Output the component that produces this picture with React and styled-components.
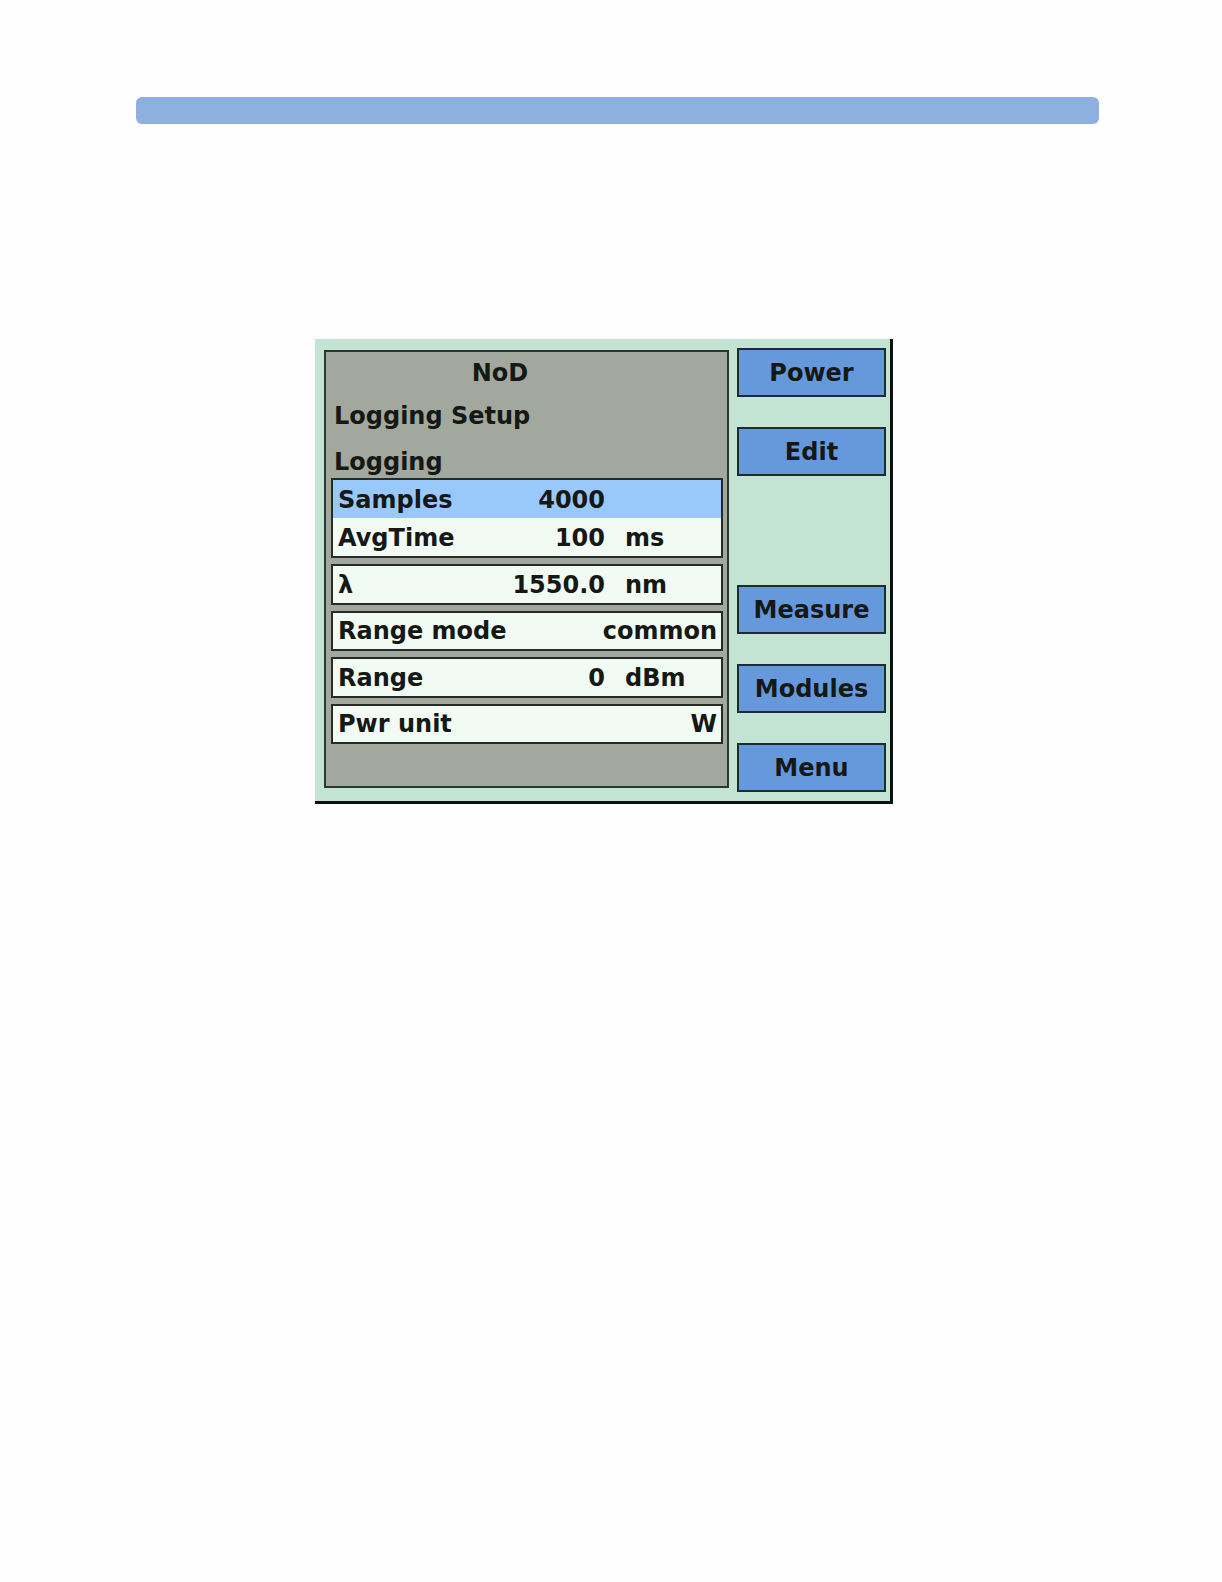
import React from 'react';
import styled, { createGlobalStyle } from 'styled-components';

const GlobalStyle = createGlobalStyle`
  html, body {
    margin: 0;
    padding: 0;
    background: #fefefe;
  }
  body {
    font-family: "DejaVu Sans", "Liberation Sans", sans-serif;
  }
`;

const Page = styled.div`
  width: 1222px;
  min-height: 1582px;
  padding-top: 97px;
  box-sizing: border-box;
`;

const TopBar = styled.div`
  margin-left: 136px;
  width: 963px;
  height: 27px;
  border-radius: 6px;
  background: #8db0e0;
`;

const Screen = styled.section`
  margin: 215px 0 0 315px;
  width: 575px;
  height: 462px;
  display: flex;
  align-items: flex-start;
  background: #c3e4d2;
  border-right: 3px solid #101010;
  border-bottom: 3px solid #101010;
  font-family: "DejaVu Sans", "Liberation Sans", sans-serif;
  font-weight: bold;
  font-size: 24px;
  color: #151815;
`;

const Panel = styled.div`
  margin: 11px 0 0 9px;
  width: 405px;
  height: 438px;
  box-sizing: border-box;
  border: 2px solid #2b3630;
  background: #a3a89f;
`;

const Title = styled.div`
  height: 42px;
  line-height: 42px;
  text-align: center;
  padding-right: 53px;
`;

const Heading = styled.div`
  height: ${p => p.$h}px;
  line-height: ${p => p.$lh}px;
  padding: ${p => p.$pt}px 0 0 8px;
  box-sizing: border-box;
`;

const List = styled.div`
  display: flex;
  flex-direction: column;
  gap: 6px;
  margin: 0 4px 0 5px;
`;

const Box = styled.div`
  border: 2px solid #262b28;
  background: #f1faf3;
`;

const Row = styled.div`
  display: flex;
  align-items: center;
  height: ${p => p.$h || 36.5}px;
  padding: 1px 4px 0 5px;
  box-sizing: border-box;
  background: ${p => (p.$active ? '#99c8fb' : 'transparent')};
  white-space: nowrap;
`;

const Label = styled.span`
  flex: 1;
`;

const Value = styled.span`
  text-align: right;
`;

const Unit = styled.span`
  width: 92px;
  margin-left: 20px;
`;

const Keys = styled.div`
  margin: 9px 0 0 8px;
  display: flex;
  flex-direction: column;
  gap: 30px;
`;

const Key = styled.div`
  width: 149px;
  height: 49px;
  box-sizing: border-box;
  border: 2px solid #1f2a33;
  background: ${p => (p.$empty ? 'transparent' : '#6699dc')};
  border-color: ${p => (p.$empty ? 'transparent' : '#1f2a33')};
  display: flex;
  align-items: center;
  justify-content: center;
  padding-top: 1px;
`;

const setting = (label, value, unit, h, active) => (
  <Row $h={h} $active={active} key={label}>
    <Label>{label}</Label>
    <Value>{value}</Value>
    {unit !== undefined && <Unit>{unit}</Unit>}
  </Row>
);

export default function App() {
  return (
    <Page>
      <GlobalStyle />
      <TopBar />
      <Screen>
        <Panel>
          <Title>NoD</Title>
          <Heading $h={44} $lh={44} $pt={0}>Logging Setup</Heading>
          <Heading $h={40} $lh={36} $pt={6}>Logging</Heading>
          <List>
            <Box>
              {setting('Samples', '4000', '', 38, true)}
              {setting('AvgTime', '100', 'ms', 38)}
            </Box>
            <Box>{setting('λ', '1550.0', 'nm')}</Box>
            <Box>{setting('Range mode', 'common')}</Box>
            <Box>{setting('Range', '0', 'dBm')}</Box>
            <Box>{setting('Pwr unit', 'W')}</Box>
          </List>
        </Panel>
        <Keys>
          <Key>Power</Key>
          <Key>Edit</Key>
          <Key $empty />
          <Key>Measure</Key>
          <Key>Modules</Key>
          <Key>Menu</Key>
        </Keys>
      </Screen>
    </Page>
  );
}
